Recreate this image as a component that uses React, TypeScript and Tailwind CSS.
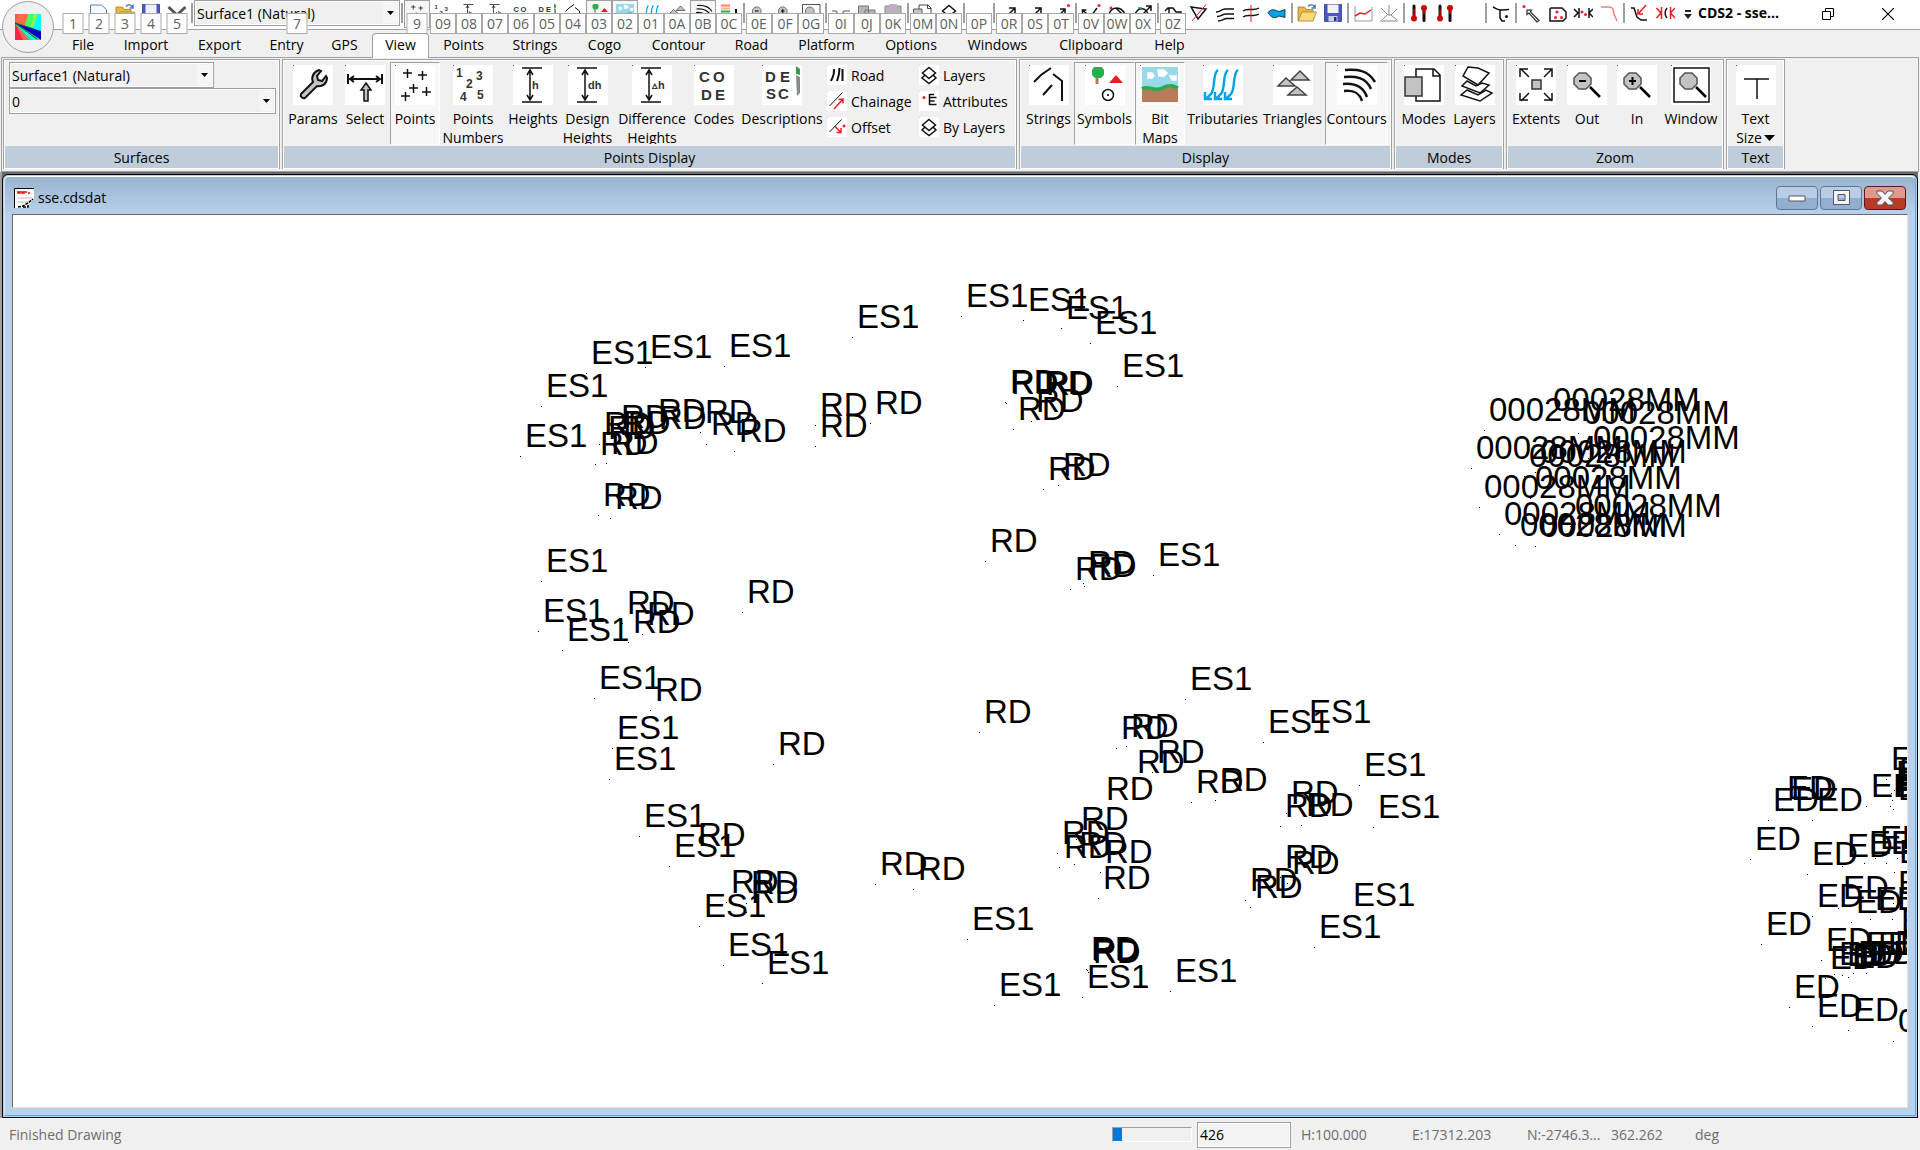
import React from "react";
import clsx from "clsx";

/* ---------- icons, all on a 40x40 grid ---------- */

const line = { fill: "none", stroke: "#111", strokeWidth: 2 };
const red = { fill: "none", stroke: "#ed1c24", strokeWidth: 2 };
const glyph = { fontFamily: "Liberation Sans, sans-serif", fontWeight: 700, fill: "#333" };

const HeightBar: React.FC<{ label: string }> = ({ label }) => (
	<g>
		<path {...line} strokeWidth={1.5} d="M9 3h20M9 37h20M17 5v30M14 10l3-5 3 5M14 30l3 5 3-5" />
		<text {...glyph} x={label === "h" ? 19 : 20} y="24" fontSize="11">{label}</text>
	</g>
);

const Lens: React.FC<{ sign?: string }> = ({ sign }) => (
	<g>
		<path d="M23 22L33 32" stroke="#000" strokeWidth="2.5" />
		<path d="M12 8h7l5 5v6l-5 5h-7l-5-5v-6z" fill="#c3c3c3" stroke="#555" strokeWidth="1.5" />
		{sign && <path d={sign} stroke="#000" strokeWidth="2" />}
	</g>
);

const icons: Record<string, React.ReactNode> = {
	params: (
		<path
			d="M8 29l12-12c-2-4 0-10 6-12l2 1-4 5 1 4 4 1 4-5 1 2c0 6-5 9-10 8L12 33c-3 1-5-2-4-4z"
			fill="#c3c3c3"
			stroke="#111"
			strokeWidth="2"
		/>
	),
	select: (
		<g>
			<path {...line} d="M3 9v10M37 9v10M5 14h30M9 11l-4 3 4 3M31 11l4 3-4 3" />
			<path d="M21 18l5 7h-3v11h-4V25h-3z" fill="#c3c3c3" stroke="#111" strokeWidth="1.5" />
		</g>
	),
	points: (
		<path {...line} strokeWidth={1.5} d="M8 8h9M12.500 4v9M23 10h9M27.500 6v9M14 23h9M18.500 19v9M27 27h9M31.500 22v9M6 31h9M10.500 27v9" />
	),
	numbers: (
		<g {...glyph} fontSize="12">
			<text x="3" y="12">1</text>
			<text x="23" y="15">3</text>
			<text x="13" y="23">2</text>
			<text x="7" y="36">4</text>
			<text x="24" y="34">5</text>
		</g>
	),
	heights: <HeightBar label="h" />,
	design: <HeightBar label="dh" />,
	difference: <HeightBar label="▵h" />,
	codes: (
		<g {...glyph} fontSize="15">
			<text x="5" y="17">C</text>
			<text x="19" y="17">O</text>
			<text x="7" y="35">D</text>
			<text x="21" y="35">E</text>
		</g>
	),
	descriptions: (
		<g {...glyph} fontSize="15">
			<text x="3" y="17">D</text>
			<text x="18" y="17">E</text>
			<text x="4" y="34">S</text>
			<text x="16" y="34">C</text>
			<path d="M34 1l4 3v6l-4-1z" fill="#3c9a47" />
			<path d="M34 10l4 2v16l-3 3z" fill="#8a8a8a" />
		</g>
	),
	road: <path {...line} strokeWidth={4} d="M8 32c3-8 7-10 6-24M20 32c3-8 5-12 5-26M31 32V8" />,
	chainage: (
		<g strokeWidth={3}>
			<path {...line} d="M5 30L31 3" />
			<path {...red} strokeWidth={3} d="M14 36L32 16M23 17l9-1v9" />
		</g>
	),
	offset: (
		<g>
			<path {...line} d="M5 30L29 5" />
			<path {...red} strokeWidth={3} d="M16 19l12 12M28 22v9h-9" />
			<circle cx="34" cy="18" r="3" fill="#ed1c24" />
		</g>
	),
	smallLayers: (
		<path {...line} strokeWidth={3} d="M20 5l13 11-13 11L7 16zM11 21l-5 5 14 11 14-11-5-5" />
	),
	attributes: (
		<g>
			<circle cx="10" cy="13" r="3" fill="#ed1c24" />
			<path {...line} strokeWidth={3} d="M21 7h9M21 13h14M21 20h10M21 27h14M21 6v22" />
		</g>
	),
	strings: <path {...line} d="M5 17l7-7 10-7M24 9l9 7v20M14 30l9-10" />,
	symbols: (
		<g>
			<path d="M12 13v6" stroke="#b97a57" strokeWidth="3" />
			<path d="M9 2h8l2 3v5l-3 3h-6l-3-3V5z" fill="#22b14c" />
			<path d="M31 10l7 8H24z" fill="#ed1c24" />
			<circle cx="23" cy="30" r="5.500" {...line} strokeWidth={1.5} />
			<circle cx="23" cy="30" r="1" fill="#000" />
		</g>
	),
	bitmaps: (
		<g>
			<path d="M2 2h36v35H2z" fill="#99d9ea" />
			<path d="M2 25c6-5 12 3 20-1s12-2 16 0v13H2z" fill="#b97a57" />
			<path d="M2 24c6-4 12 3 20-1s12-2 16 0" fill="none" stroke="#22b14c" strokeWidth="3.500" />
			<path d="M8 8h4l2 3-2 2H8zM18 5h6l3 3-3 3h-5zM30 11h6v4h-4z" fill="#fff" stroke="#fff" strokeWidth="1.500" />
		</g>
	),
	tributaries: (
		<path
			d="M15 5c-6 4-2 17-7 24l-5 5M2 27v7h7M25 5c-6 4-2 17-7 24l-5 5M12 27v7h7M35 5c-6 4-2 17-7 24l-5 5M22 27v7h7"
			fill="none"
			stroke="#00a2e8"
			strokeWidth="2.500"
		/>
	),
	triangles: (
		<path d="M27 6l9 9H18zM13 13l9 8H5zM24 22l9 8H15z" fill="#c3c3c3" stroke="#444" strokeWidth="1.500" />
	),
	contours: (
		<path {...line} strokeWidth={2.5} d="M8 5c12-1 23 0 30 12M7 12c11-1 22 0 27 12M6 19c10-1 20 2 24 13M7 26c9-1 15 1 18 10" />
	),
	modes: (
		<g>
			<path d="M12 4h18l6 6v26H12z" fill="#fff" stroke="#111" strokeWidth="1.500" />
			<path d="M29 4v7h7" {...line} strokeWidth={1.5} />
			<path d="M1 12h17v19H1z" fill="#c3c3c3" stroke="#333" strokeWidth="1.500" />
		</g>
	),
	layers: (
		<g fill="#fff" stroke="#111" strokeWidth="1.500">
			<path d="M12 25l-6 5 19 6 12-8-6-3-8 5z" />
			<path d="M12 16l-5 5 18 7 9-8-7-2-6 3z" />
			<path d="M13 2l10 1 11 5-11 12L8 11z" />
		</g>
	),
	extents: (
		<g>
			<path {...line} strokeWidth={1.5} d="M13 12L5 4M4 12V4h8M28 12l8-8M28 4h8v8M13 28l-8 8M4 28v7h8M28 28l8 8M36 28v7h-8" />
			<path d="M16 15h9v9h-9z" fill="#c3c3c3" stroke="#333" strokeWidth="1.500" />
		</g>
	),
	out: <Lens sign="M12 16h7" />,
	in: <Lens sign="M12 16h7M15.500 12v8" />,
	window: (
		<g>
			<path d="M3 3h35v34H3z" fill="#fff" stroke="#111" strokeWidth="1.500" />
			<g transform="translate(2 0)">
				<Lens />
			</g>
		</g>
	),
	textSize: <path {...line} strokeWidth={1.5} d="M8 14h25M21 14v20" />,

	/* quick access only */
	blank: null,
	newFile: <path d="M3 4h22l10 9v27H3z" fill="#f6f9ff" stroke="#5b7aa8" strokeWidth="2" />,
	folder: (
		<g>
			<path d="M2 8h13l3 5h14v22H2z" fill="#e9b94a" stroke="#9a7a2a" strokeWidth="1.500" />
			<path d="M2 36l8-18h29l-7 18z" fill="#fbd978" stroke="#9a7a2a" strokeWidth="1.500" />
			<path d="M22 7c5-5 10-4 13 1M36 3v7h-7" fill="none" stroke="#4a7ab0" strokeWidth="3" />
		</g>
	),
	save: (
		<g>
			<path d="M3 3h34v34H3z" fill="#4a55c8" stroke="#2a328a" strokeWidth="1.500" />
			<path d="M9 3h22v17H9z" fill="#f0f3fb" />
			<path d="M11 26h18v11H11z" fill="#c9cfe4" />
			<path d="M22 28h5v8h-5z" fill="#2a328a" />
		</g>
	),
	check: <path d="M3 8l17 16L37 8" fill="none" stroke="#555" strokeWidth="6" />,
	bars: (
		<g strokeWidth="4">
			<path d="M4 5h18" stroke="#ff7f7f" />
			<path d="M4 11h18" stroke="#ffb27f" />
			<path d="M4 17h18" stroke="#22b14c" />
			<path d="M34 12v12" stroke="#111" />
		</g>
	),
	brokenLine: <path d="M2 16h8l4 6h8l4-6h12" fill="none" stroke="#8a8a8a" strokeWidth="3" />,
	copy: <path d="M3 6h20v15H3zM16 14h20v15H16z" fill="#b5b5b5" stroke="#777" strokeWidth="2" />,
	paste: (
		<g>
			<path d="M4 6h32v32H4z" fill="#b5b5b5" stroke="#888" strokeWidth="2" />
			<path d="M12 2h16v8H12z" fill="#cfa6cf" />
		</g>
	),
	arrow: <path {...line} strokeWidth={3} d="M8 34L32 10M20 10h12v12" />,
	arrowRed: (
		<g>
			<path {...line} strokeWidth={3} d="M6 36L28 12M18 12h10v10" />
			<circle cx="35" cy="5" r="3" fill="#ed1c24" />
		</g>
	),
	vee: (
		<g>
			<path {...line} strokeWidth={3} d="M3 14l16 14 13-18M3 22v-8h8" />
			<circle cx="36" cy="5" r="3" fill="#ed1c24" />
		</g>
	),
	arcs: (
		<g>
			<path {...line} strokeWidth={3} d="M4 22c6-16 24-16 32 0M18 10l14 14" />
			<circle cx="8" cy="10" r="3" fill="#ed1c24" />
		</g>
	),
	arcArrow: (
		<g>
			<path {...line} strokeWidth={3} d="M4 22c8-16 22-12 26 0M18 24L36 6M26 6h10v10" />
			<path d="M10 10h8" stroke="#22b14c" strokeWidth="3" />
		</g>
	),
	polyline: <path {...line} strokeWidth={3} d="M4 16l6-6h10l6 8h10v8M12 10v14" />,
	cutTriangle: (
		<g>
			<path {...line} strokeWidth={3} d="M4 8l30 4-16 20z" />
			<path {...red} d="M34 3L6 36" />
		</g>
	),
	smallContours: <path {...line} strokeWidth={3} d="M2 18c10 0 10-6 18-6h18M4 27c10 0 10-5 18-5h16M6 36c10 0 10-5 18-5h14" />,
	crossing: (
		<g>
			<path {...line} strokeWidth={3} d="M4 16c10-8 20 2 32-6M4 28c10-8 20 2 32-6" />
			<path {...red} d="M20 4v34" />
		</g>
	),
	fish: <path d="M2 19c8-10 16-4 22-2l12-4v16l-12-3c-8 6-16 4-22-7z" fill="#00a2e8" stroke="#111" strokeWidth="1.500" />,
	section: (
		<g>
			<path d="M4 6v30h34V8" fill="none" stroke="#999" strokeWidth="2" />
			<path {...red} strokeWidth={3} d="M4 26l10-6 10 2 12-8" />
		</g>
	),
	intersect: <path d="M2 36h36M4 10l14 14h6l12-12M20 4v20M16 24L6 34M24 24l12 10" fill="none" stroke="#888" strokeWidth="2" />,
	thermometers: (
		<g fill="#c00">
			<path d="M10 6v24M30 9v26" stroke="#111" strokeWidth="6" strokeLinecap="round" />
			<circle cx="10" cy="31" r="6" />
			<circle cx="30" cy="10" r="6" />
			<path d="M10 12v14M30 12v10" stroke="#c00" strokeWidth="3" />
		</g>
	),
	branch: (
		<g>
			<path {...line} strokeWidth={3} d="M4 8c8 4 8 6 18 6l14-1M18 14v16l4 6h6" />
			<circle cx="31" cy="27" r="3" fill="#111" />
		</g>
	),
	pencil: (
		<g>
			<path d="M12 14h9l-2 4 17 17-4 3-16-18-4 3z" fill="#fff" stroke="#333" strokeWidth="2.500" />
			<circle cx="6" cy="7" r="3" fill="#ed1c24" />
		</g>
	),
	polygon: (
		<g>
			<path {...line} strokeWidth={3} d="M8 10h22l8 8v12l-6 6H6V12z" />
			<circle cx="20" cy="18" r="3" fill="#ed1c24" />
			<circle cx="17" cy="29" r="3" fill="#ed1c24" />
			<circle cx="29" cy="29" r="3" fill="#ed1c24" />
		</g>
	),
	trim: (
		<g>
			<path {...line} strokeWidth={3} d="M2 12l8 8-8 8M12 10v20M32 10v20M40 12l-8 8 8 8" />
			<circle cx="18" cy="18" r="3" fill="#ed1c24" />
			<circle cx="25" cy="23" r="3" fill="#ed1c24" />
		</g>
	),
	fillet: <path d="M4 8h16c8 0 8 4 10 14l6 14" fill="none" stroke="#f08080" strokeWidth="3" />,
	insert: (
		<g>
			<path {...line} strokeWidth={3} d="M4 10h6l6 18 8 6h12" />
			<path {...red} strokeWidth={3} d="M34 4L18 22M18 12v10h10" />
		</g>
	),
	join: (
		<g>
			<path {...red} strokeWidth={3} d="M3 10l9 10-9 10M13 8v24M40 10l-9 10 9 10M31 8v24" />
			<path {...line} strokeWidth={3} d="M24 10c-5 5-5 15 0 20" />
		</g>
	),
};

const Icon: React.FC<{ name: string; small?: boolean; plain?: boolean }> = ({ name, small, plain }) => (
	<svg
		viewBox="0 0 40 40"
		aria-hidden="true"
		className={clsx("shrink-0", small ? "h-5 w-5" : "h-10 w-10", !plain && "bg-white")}
	>
		{icons[name]}
		{!plain && <path d="M0 0h1v1H0z" fill="#ed1c24" />}
	</svg>
);

/* ---------- quick access bar ---------- */

type QuickItem = { icon: string; tip?: string; on?: boolean };

const fileTools: QuickItem[] = [
	{ icon: "blank", tip: "1" },
	{ icon: "newFile", tip: "2" },
	{ icon: "folder", tip: "3" },
	{ icon: "save", tip: "4" },
	{ icon: "check", tip: "5" },
];

const quickGroups: QuickItem[][] = [
	[
		{ icon: "points", tip: "9", on: true },
		{ icon: "numbers", tip: "09" },
		{ icon: "heights", tip: "08" },
		{ icon: "difference", tip: "07" },
		{ icon: "codes", tip: "06" },
		{ icon: "descriptions", tip: "05" },
		{ icon: "strings", tip: "04" },
		{ icon: "symbols", tip: "03", on: true },
		{ icon: "bitmaps", tip: "02", on: true },
		{ icon: "tributaries", tip: "01" },
		{ icon: "triangles", tip: "0A" },
		{ icon: "contours", tip: "0B", on: true },
		{ icon: "bars", tip: "0C" },
	],
	[
		{ icon: "out", tip: "0E" },
		{ icon: "in", tip: "0F" },
		{ icon: "window", tip: "0G" },
	],
	[
		{ icon: "brokenLine", tip: "0I" },
		{ icon: "copy", tip: "0J" },
		{ icon: "paste", tip: "0K" },
	],
	[
		{ icon: "modes", tip: "0M" },
		{ icon: "smallLayers", tip: "0N" },
	],
	[{ icon: "blank", tip: "0P" }],
	[
		{ icon: "arrow", tip: "0R" },
		{ icon: "arrow", tip: "0S" },
		{ icon: "arrowRed", tip: "0T" },
	],
	[
		{ icon: "vee", tip: "0V" },
		{ icon: "arcs", tip: "0W" },
		{ icon: "arcArrow", tip: "0X" },
	],
	[
		{ icon: "polyline", tip: "0Z" },
		{ icon: "cutTriangle" },
		{ icon: "smallContours" },
		{ icon: "crossing" },
		{ icon: "fish" },
	],
	[{ icon: "folder" }, { icon: "save" }],
	[{ icon: "section" }, { icon: "intersect" }],
	[{ icon: "thermometers" }, { icon: "thermometers" }, { icon: "blank" }],
	[{ icon: "branch" }],
	[{ icon: "pencil" }, { icon: "polygon" }, { icon: "trim" }, { icon: "fillet" }],
	[{ icon: "insert" }, { icon: "join" }],
];

const KeyTip: React.FC<{ label: string }> = ({ label }) => (
	<span
		className={clsx(
			"absolute left-1/2 top-[13px] z-10 h-[21px] -translate-x-1/2 border border-[#a9a9a9] bg-white text-center text-[14px] leading-[20px] text-[#606060]",
			label.length === 1 ? "w-[21px]" : "w-[26px]"
		)}
	>
		{label}
	</span>
);

const QuickButton: React.FC<QuickItem> = ({ icon, tip, on }) => (
	<button
		type="button"
		aria-label={icon}
		className={clsx(
			"relative flex h-7 w-[26px] shrink-0 justify-center pt-[3px]",
			on && "bg-[#f6f6f6] outline-1 -outline-offset-1 outline-[#a0a0a0]"
		)}
	>
		<Icon name={icon} small plain />
		{tip && <KeyTip label={tip} />}
	</button>
);

const Separator = () => <span className="mx-px mt-[3px] h-5 w-0.5 shrink-0 bg-[#a0a0a0]" />;

const Combo: React.FC<{ label: string; value: string; className?: string }> = ({ label, value, className }) => (
	<div className={clsx("relative h-[26px] shrink-0 border border-[#a0a0a0] bg-[#f0f0f0] outline-1 -outline-offset-2 outline-white", className)}>
		<select aria-label={label} className="h-full w-full appearance-none bg-transparent pl-0.5 text-[14px] leading-6 outline-none">
			<option>{value}</option>
		</select>
		<span className="pointer-events-none absolute inset-y-0.5 right-0.5 flex w-3.5 items-center justify-center bg-[#f6f6f6]">
			<svg viewBox="0 0 7 4" className="h-1 w-[7px]" aria-hidden="true">
				<path d="M0 0h7L3.500 4z" fill="#000" />
			</svg>
		</span>
	</div>
);

const TitleBar = () => (
	<div className="flex h-[30px] items-start border-b border-[#a0a0a0] bg-white pl-[60px]">
		{fileTools.map((t) => (
			<QuickButton key={t.tip} {...t} />
		))}
		<Separator />
		<div className="relative">
			<Combo label="Current surface" value="Surface1 (Natural)" className="w-[206px]" />
			<KeyTip label="7" />
		</div>
		{quickGroups.map((group, i) => (
			<React.Fragment key={i}>
				<Separator />
				{group.map((t, j) => (
					<QuickButton key={j} {...t} />
				))}
			</React.Fragment>
		))}
		<button type="button" aria-label="More tools" className="flex h-7 w-5 shrink-0 items-center justify-center">
			<svg viewBox="0 0 8 9" className="h-[9px] w-2" aria-hidden="true">
				<path d="M1 0h6v2H1zM0 4h8L4 9z" fill="#222" />
			</svg>
		</button>
		<h1 className="shrink-0 whitespace-nowrap text-[14px] font-bold leading-[26px]">CDS2 - sse...</h1>
		<div className="ml-auto flex h-7 shrink-0 items-center pr-0.5">
			<button type="button" aria-label="Restore" className="flex w-[60px] justify-center">
				<svg viewBox="0 0 12 12" className="h-3 w-3" aria-hidden="true">
					<path d="M.5 3.500h8v8h-8zM3.500 3V.5h8v8H9" fill="none" stroke="#000" />
				</svg>
			</button>
			<button type="button" aria-label="Close" className="flex w-[60px] justify-center">
				<svg viewBox="0 0 12 12" className="h-3 w-3" aria-hidden="true">
					<path d="M0 0l12 12M12 0L0 12" stroke="#000" strokeWidth="1.200" />
				</svg>
			</button>
		</div>
	</div>
);

const AppButton = () => (
	<button
		type="button"
		aria-label="Application menu"
		className="absolute left-0.5 top-px z-20 flex size-[52px] items-center justify-center rounded-full border border-[#a0a0a0] bg-[#f0f0f0]"
	>
		<svg viewBox="0 0 26 26" className="size-[26px]" aria-hidden="true">
			<path d="M0 0h26v26H0z" fill="#f55" />
			<path d="M3 0h9l-1 13-11-4z" fill="#ff6b4a" />
			<path d="M13 0h7l-3 14-7-2z" fill="#4f6" />
			<path d="M19 0h4l-5 16-3-1z" fill="#8f4" />
			<path d="M23 0h3v19l-9-4z" fill="#0ff" />
			<path d="M0 9l26 8v9z" fill="#00c" />
			<path d="M0 9l26 17H14z" fill="#2fdc8f" />
			<path d="M0 9l22 17h-5z" fill="#0ff" />
			<path d="M0 9l14 17H6z" fill="#f64" />
			<path d="M0 9l8 17H0z" fill="#f24" />
			<path d="M0 9l19 6M0 9l22 16" stroke="#063" strokeWidth="1" />
		</svg>
	</button>
);

/* ---------- ribbon ---------- */

const tabs: [string, string][] = [
	["File", "w-[52px]"],
	["Import", "w-[74px]"],
	["Export", "w-[73px]"],
	["Entry", "w-[61px]"],
	["GPS", "w-[55px]"],
	["View", "w-[57px]"],
	["Points", "w-[69px]"],
	["Strings", "w-[74px]"],
	["Cogo", "w-[65px]"],
	["Contour", "w-[83px]"],
	["Road", "w-[63px]"],
	["Platform", "w-[87px]"],
	["Options", "w-[82px]"],
	["Windows", "w-[91px]"],
	["Clipboard", "w-[96px]"],
	["Help", "w-[61px]"],
];

const RibbonButton: React.FC<{ icon: string; label: string; width: string; on?: boolean; menu?: boolean }> = ({ icon, label, width, on, menu }) => (
	<button
		type="button"
		aria-pressed={on}
		className={clsx(
			"flex h-[83px] shrink-0 flex-col items-center overflow-hidden border pt-0.5",
			width,
			on ? "border-b-white border-l-[#a0a0a0] border-r-white border-t-[#a0a0a0] bg-[#f7f7f7]" : "border-transparent"
		)}
	>
		<Icon name={icon} />
		<span className="mt-1 flex flex-col items-center text-[14px] leading-[19px]">
			{label.split("|").map((word, i) => (
				<span key={word} className="flex items-center gap-0.5 whitespace-nowrap">
					{word}
					{menu && i === 1 && (
						<svg viewBox="0 0 11 6" className="h-1.5 w-[11px]" aria-hidden="true">
							<path d="M0 0h11L5.500 6z" fill="#000" />
						</svg>
					)}
				</span>
			))}
		</span>
	</button>
);

const SmallButton: React.FC<{ icon: string; label: string }> = ({ icon, label }) => (
	<button type="button" className="flex h-[26px] items-center gap-1 whitespace-nowrap text-[14px]">
		<Icon name={icon} small />
		{label}
	</button>
);

const Group: React.FC<{ title: string; children: React.ReactNode }> = ({ title, children }) => (
	<section className="flex shrink-0 flex-col border border-[#a0a0a0]">
		<div className="flex flex-col border border-white">
			<div className="flex h-[85px] px-0.5 pt-px">{children}</div>
			<h2 className="h-[22px] bg-[#bfcddb] text-center text-[14px] leading-[23px]">{title}</h2>
		</div>
	</section>
);

const Ribbon = () => (
	<div className="mx-px flex h-[115px] gap-0.5 overflow-hidden border border-[#a0a0a0] px-px pt-px pb-0.5">
		<Group title="Surfaces">
			<div className="flex w-[269px] flex-col pl-0.5">
				<Combo label="Surface" value="Surface1 (Natural)" className="w-[205px]" />
				<Combo label="Layer" value="0" className="w-[267px]" />
			</div>
		</Group>
		<Group title="Points Display">
			<RibbonButton icon="params" label="Params" width="w-[54px]" />
			<RibbonButton icon="select" label="Select" width="w-[50px]" />
			<RibbonButton icon="points" label="Points" width="w-[50px]" on />
			<RibbonButton icon="numbers" label="Points|Numbers" width="w-[66px]" />
			<RibbonButton icon="heights" label="Heights" width="w-[54px]" />
			<RibbonButton icon="design" label="Design|Heights" width="w-[55px]" />
			<RibbonButton icon="difference" label="Difference|Heights" width="w-[74px]" />
			<RibbonButton icon="codes" label="Codes" width="w-[50px]" />
			<RibbonButton icon="descriptions" label="Descriptions" width="w-[86px]" />
			<div className="flex w-[94px] flex-col pl-0.5">
				<SmallButton icon="road" label="Road" />
				<SmallButton icon="chainage" label="Chainage" />
				<SmallButton icon="offset" label="Offset" />
			</div>
			<div className="flex w-[94px] flex-col">
				<SmallButton icon="smallLayers" label="Layers" />
				<SmallButton icon="attributes" label="Attributes" />
				<SmallButton icon="smallLayers" label="By Layers" />
			</div>
		</Group>
		<Group title="Display">
			<RibbonButton icon="strings" label="Strings" width="w-[51px]" />
			<RibbonButton icon="symbols" label="Symbols" width="w-[61px]" on />
			<RibbonButton icon="bitmaps" label="Bit|Maps" width="w-[50px]" on />
			<RibbonButton icon="tributaries" label="Tributaries" width="w-[75px]" />
			<RibbonButton icon="triangles" label="Triangles" width="w-[65px]" />
			<RibbonButton icon="contours" label="Contours" width="w-[63px]" on />
		</Group>
		<Group title="Modes">
			<RibbonButton icon="modes" label="Modes" width="w-[51px]" />
			<RibbonButton icon="layers" label="Layers" width="w-[51px]" />
		</Group>
		<Group title="Zoom">
			<RibbonButton icon="extents" label="Extents" width="w-[52px]" />
			<RibbonButton icon="out" label="Out" width="w-[50px]" />
			<RibbonButton icon="in" label="In" width="w-[50px]" />
			<RibbonButton icon="window" label="Window" width="w-[58px]" />
		</Group>
		<Group title="Text">
			<RibbonButton icon="textSize" label="Text|Size" width="w-[51px]" menu />
		</Group>
	</div>
);

/* ---------- drawing ---------- */

// left edge and cap line of every point label, in drawing units
const labels: Record<string, [number, number][]> = {
	ES1: [
		[968, 283], [859, 304], [593, 340], [652, 334], [731, 333], [548, 373], [527, 423], [548, 548],
		[545, 598], [569, 617], [601, 665], [1030, 287], [1068, 295], [1097, 310], [1124, 353], [1160, 542],
		[619, 715], [616, 746], [646, 803], [676, 833], [706, 893], [730, 932], [769, 950], [974, 906],
		[1001, 972], [1192, 666], [1270, 709], [1311, 699], [1366, 752], [1380, 794], [1355, 882],
		[1321, 914], [1177, 958], [1089, 964],
	],
	RD: [
		[822, 392], [877, 390], [822, 413], [660, 398], [661, 405], [707, 399], [713, 411], [741, 418],
		[623, 404], [625, 410], [606, 411], [610, 415], [602, 431], [613, 430], [605, 482], [617, 485],
		[992, 528], [629, 590], [649, 601], [635, 609], [749, 579], [1012, 369], [1013, 370], [1046, 370],
		[1048, 371], [1038, 388], [1020, 396], [1050, 456], [1065, 452], [1077, 556], [1090, 550],
		[1091, 553], [657, 677], [780, 731], [986, 699], [700, 822], [733, 869], [753, 870], [753, 879],
		[882, 851], [920, 856], [1123, 715], [1133, 713], [1159, 739], [1139, 749], [1108, 776],
		[1198, 769], [1222, 767], [1293, 780], [1287, 793], [1308, 792], [1083, 806], [1064, 820],
		[1066, 834], [1081, 831], [1107, 839], [1105, 865], [1093, 936], [1094, 937], [1095, 939],
		[1287, 844], [1294, 850], [1252, 867], [1257, 874],
	],
	"00028MM": [
		[1555, 387], [1491, 397], [1585, 400], [1595, 425], [1478, 435], [1531, 443], [1542, 439],
		[1537, 465], [1486, 474], [1577, 493], [1506, 501], [1522, 512], [1542, 513], [1900, 1008],
	],
	ED: [
		[1893, 746], [1873, 773], [1789, 775], [1793, 776], [1775, 787], [1819, 787], [1757, 826],
		[1814, 841], [1849, 833], [1871, 830], [1882, 825], [1893, 830], [1901, 839], [1904, 825],
		[1845, 875], [1819, 883], [1858, 889], [1877, 886], [1900, 870], [1899, 886], [1768, 911],
		[1903, 908], [1828, 927], [1832, 945], [1841, 941], [1849, 942], [1855, 944], [1860, 940],
		[1873, 940], [1868, 931], [1880, 931], [1890, 931], [1897, 930], [1796, 974], [1819, 993],
		[1855, 997], [1897, 773], [1898, 760], [1900, 776], [1899, 767], [1901, 757],
	],
};

const ORIGIN_X = 13;
const ORIGIN_Y = 216;

const Drawing = () => (
	<main className="relative min-h-0 flex-1 overflow-hidden border border-b-[#e3e3e3] border-l-[#696969] border-r-[#e3e3e3] border-t-[#696969] bg-white">
		{Object.entries(labels).map(([code, places]) =>
			places.map(([x, y], i) => (
				<React.Fragment key={code + i}>
					<span
						className="absolute whitespace-nowrap font-['Liberation_Sans',Arial,sans-serif] text-[33px] leading-[33px] text-black"
						style={{ left: x - ORIGIN_X - 2, top: y - ORIGIN_Y - 3 }}
					>
						{code}
					</span>
					<span className="absolute size-px bg-black" style={{ left: x - ORIGIN_X - 7, top: y - ORIGIN_Y + 34 }} />
				</React.Fragment>
			))
		)}
	</main>
);

const frameButton = "flex h-6 w-[42px] items-center justify-center rounded-sm border border-[#5f7693]";

const DocumentWindow = () => (
	<div className="flex min-h-0 flex-1 flex-col border-l-2 border-r-2 border-[#a0a0a0] border-r-[#f0f0f0] bg-[#696969] pt-0.5">
		<div className="flex min-h-0 flex-1 flex-col rounded-t-md border border-black bg-[#b9d1ea] p-px">
			<div className="flex min-h-0 flex-1 flex-col rounded-t-[5px] border-b border-l border-r border-t border-b-[#21c5dc] border-l-[#d5e4f4] border-r-[#21c5dc] border-t-white bg-gradient-to-b from-[#9ab4d0] to-[#b9d1ea] bg-[length:100%_38px] bg-no-repeat px-[7px] pb-[7px]">
				<div className="flex h-[37px] items-center gap-1 pr-0.5 pt-[5px]">
					<svg viewBox="0 0 20 20" className="ml-0.5 size-5" aria-hidden="true">
						<path d="M0 0h20v11l-8 9H0z" fill="#fff" />
						<path d="M.5 20V.5H20" fill="none" stroke="#000" />
						<path d="M4 3v2h2V3M8 3v2h2V3M12 3v2M14 5h2" fill="none" stroke="#e00" strokeWidth="1.500" />
						<path d="M4 10h14M4 14h10" stroke="#bbb" />
						<path d="M4 19l5-1 5-3 5-4M9 19h5v-3" fill="none" stroke="#000" strokeWidth="1.500" strokeDasharray="3 1" />
					</svg>
					<h2 className="flex-1 text-[14px] leading-5">sse.cdsdat</h2>
					<div className="flex gap-0.5 pb-px">
						<button type="button" aria-label="Minimize drawing" className={clsx(frameButton, "bg-gradient-to-b from-[#b9cee6] from-50% to-[#92afd0] to-50%")}>
							<svg viewBox="0 0 18 7" className="mt-0.5 h-[7px] w-[18px]" aria-hidden="true">
								<path d="M1 1h16v5H1z" fill="#fff" stroke="#535666" />
							</svg>
						</button>
						<button type="button" aria-label="Maximize drawing" className={clsx(frameButton, "bg-gradient-to-b from-[#b9cee6] from-50% to-[#92afd0] to-50%")}>
							<svg viewBox="0 0 17 15" className="h-[15px] w-[17px]" aria-hidden="true">
								<path d="M.5.5h16v14H.5zM5 4.500v6h7v-6z" fill="#f4f4f4" fillRule="evenodd" stroke="#535666" />
							</svg>
						</button>
						<button
							type="button"
							aria-label="Close drawing"
							className="flex h-6 w-[42px] items-center justify-center rounded-sm border border-[#5a1a1e] bg-gradient-to-b from-[#e0998c] from-50% to-[#b83a26] to-50%"
						>
							<svg viewBox="0 0 18 16" className="h-4 w-[18px]" aria-hidden="true">
								<path d="M1 1h5l3 3.500L12 1h5v2.500L12.500 8l4.500 4.500V15h-5l-3-3.500L6 15H1v-2.500L5.500 8 1 3.500z" fill="#f4f4f4" stroke="#535666" />
							</svg>
						</button>
					</div>
				</div>
				<Drawing />
			</div>
		</div>
	</div>
);

/* ---------- status bar ---------- */

const StatusBar = () => (
	<footer className="flex h-8 shrink-0 items-center overflow-hidden border-t border-white pl-[9px] text-[14px] leading-5 text-[#6d6d6d]">
		<span className="flex-1 whitespace-nowrap">Finished Drawing</span>
		<div role="progressbar" aria-label="Drawing progress" aria-valuenow={12} className="mr-[5px] h-[15px] w-20 border border-b-white border-l-[#a0a0a0] border-r-white border-t-[#a0a0a0]">
			<div className="h-full w-[9px] bg-[#0078d7]" />
		</div>
		<input
			aria-label="Point number"
			defaultValue="426"
			className="mr-2.5 h-[26px] w-[94px] border border-[#a0a0a0] bg-[#f3f3f3] px-0.5 text-black outline-1 -outline-offset-2 outline-white"
		/>
		<span className="w-[111px]">H:100.000</span>
		<span className="w-[115px]">E:17312.203</span>
		<span className="w-[84px]">N:-2746.3...</span>
		<span className="w-[84px]">362.262</span>
		<span className="w-[225px]">deg</span>
	</footer>
);

const App: React.FC = () => {
	return (
		<div className="flex h-screen flex-col overflow-hidden bg-[#f0f0f0] font-['Open_Sans','Noto_Sans',sans-serif] text-black">
			<header className="relative shrink-0">
				<AppButton />
				<TitleBar />
				<nav className="flex h-[27px] items-end pl-[57px]">
					{tabs.map(([name, width]) => (
						<a
							key={name}
							href="#"
							className={clsx(
								"relative h-[25px] shrink-0 text-center text-[14px]",
								width,
								name === "View"
									? "z-10 -mb-px rounded-t-sm border border-b-0 border-[#a0a0a0] bg-white leading-[22px]"
									: "leading-[25px]"
							)}
						>
							{name}
						</a>
					))}
				</nav>
				<Ribbon />
			</header>
			<DocumentWindow />
			<StatusBar />
		</div>
	);
};

export default App;
